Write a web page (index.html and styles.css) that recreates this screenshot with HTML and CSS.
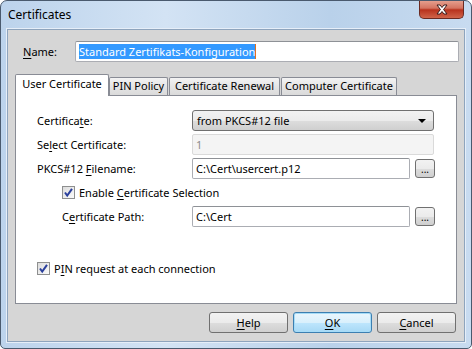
FILE: index.html
```html
<!DOCTYPE html>
<html>

<head>
  <meta charset="UTF-8" />
  <link rel="stylesheet" href="styles.css">
</head>

<body>
  <div class="window">
    <!-- Titelleiste -->
    <div class="titlebar">
      <span class="title">Certificates</span>
      <span class="close">
        <svg width="14" height="11" viewBox="0 0 14 11">
          <path d="M2 1 L5 1 L7 3.5 L9 1 L12 1 L8.6 5.5 L12 10 L9 10 L7 7.5 L5 10 L2 10 L5.4 5.5 Z"
            fill="#fff" stroke="#3a1a1a" stroke-width="1" stroke-linejoin="round" />
        </svg>
      </span>
    </div>

    <div class="client">
      <div class="name-row">
        <span class="lbl"><u>N</u>ame:</span>
        <div class="field name-field"><span class="sel">Standard Zertifikats-Konfiguration</span><span class="caret"></span></div>
      </div>

      <div class="tabs">
        <div class="tab active t1">User Certificate</div>
        <div class="tab t2">PIN Policy</div>
        <div class="tab t3">Certificate Renewal</div>
        <div class="tab t4">Computer Certificate</div>
      </div>

      <div class="panel">
        <div class="row">
          <span class="lbl">Certifica<u>t</u>e:</span>
          <div class="combo">
            <span>from PKCS#12 file</span>
            <span class="arrow"></span>
          </div>
        </div>
        <div class="row">
          <span class="lbl">Se<u>l</u>ect Certificate:</span>
          <div class="field disabled wide">1</div>
        </div>
        <div class="row">
          <span class="lbl">PKCS#12 <u>F</u>ilename:</span>
          <div class="field">C:\Cert\usercert.p12</div>
          <div class="dots">...</div>
        </div>
        <div class="row indent">
          <span class="check"><svg width="11" height="11" viewBox="0 0 11 11"><path d="M2 5.5 L4.2 8.5 L9 1.8" fill="none" stroke="#2a3f9c" stroke-width="2" /></svg></span>
          <span>Enable <u>C</u>ertificate Selection</span>
        </div>
        <div class="row indent">
          <span class="lbl short">C<u>e</u>rtificate Path:</span>
          <div class="field">C:\Cert</div>
          <div class="dots">...</div>
        </div>
        <div class="row pin">
          <span class="check"><svg width="11" height="11" viewBox="0 0 11 11"><path d="M2 5.5 L4.2 8.5 L9 1.8" fill="none" stroke="#2a3f9c" stroke-width="2" /></svg></span>
          <span>P<u>I</u>N request at each connection</span>
        </div>
      </div>

      <div class="buttons">
        <div class="btn"><u>H</u>elp</div>
        <div class="btn default"><u>O</u>K</div>
        <div class="btn"><u>C</u>ancel</div>
      </div>
    </div>
  </div>
</body>

</html>
```

FILE: styles.css
```css
html,
body {
  margin: 0;
  padding: 0;
  background: #fff;
}

body {
  font-family: "Noto Sans", "Open Sans", sans-serif;
  font-size: 11px;
  color: #000;
}

u {
  text-decoration-thickness: 1px;
  text-underline-offset: 2px;
}

/* Fensterrahmen */
.window {
  position: relative;
  width: 470px;
  height: 347px;
  border: 1px solid #4a5a6e;
  border-radius: 7px 7px 5px 5px;
  background: linear-gradient(to right, #bcd3ec 0%, #d3e3f4 35%, #b9d1ea 70%, #c8dbf0 100%);
  overflow: hidden;
}

.titlebar {
  height: 28px;
  display: flex;
  align-items: center;
  padding-left: 7px;
}

.title {
  font-size: 12px;
  padding-bottom: 2px;
}

.close {
  position: absolute;
  top: -1px;
  right: 7px;
  width: 45px;
  height: 19px;
  border: 1px solid #6b2a22;
  border-top: none;
  border-radius: 0 0 5px 5px;
  background: linear-gradient(to bottom, #e8a493 0%, #d47461 45%, #b8321d 55%, #d0644a 100%);
  display: flex;
  align-items: center;
  justify-content: center;
  box-sizing: border-box;
}

/* Client-Bereich */
.client {
  margin: 0 6px 0 6px;
  height: 313px;
  box-sizing: border-box;
  border: 1px solid #8ea4bd;
  background: #d6d6d6;
  box-shadow: 0 0 0 1px #e6eef8;
}

.name-row {
  display: flex;
  align-items: center;
  padding: 11px 0 0 15px;
  height: 21px;
}

.name-row .lbl {
  width: 52px;
}

.field {
  box-sizing: border-box;
  height: 21px;
  border: 1px solid #abadb3;
  border-top-color: #8e9196;
  border-radius: 2px;
  background: #fff;
  padding: 0 3px;
  display: flex;
  align-items: center;
  width: 218px;
  white-space: nowrap;
}

.name-field {
  width: 384px;
}

.sel {
  background: #3399ff;
  color: #fff;
  line-height: 15px;
}

.caret {
  display: inline-block;
  width: 1px;
  height: 15px;
  background: #e07020;
}

/* Registerkarten */
.tabs {
  display: flex;
  align-items: flex-end;
  margin: 12px 0 0 7px;
  height: 21px;
  position: relative;
  z-index: 1;
}

.tab {
  box-sizing: border-box;
  height: 18px;
  border: 1px solid #898c95;
  border-bottom: none;
  border-radius: 2px 2px 0 0;
  background: linear-gradient(to bottom, #f3f3f3, #e5e5e5 50%, #dadada);
  text-align: center;
  line-height: 16px;
  margin-right: 1px;
  white-space: nowrap;
}

.tab.active {
  height: 22px;
  margin-bottom: -1px;
  background: #fff;
  line-height: 18px;
  margin-right: 0;
}

.t1 { width: 94px; }
.t2 { width: 59px; }
.t3 { width: 111px; }
.t4 { width: 116px; }

.panel {
  box-sizing: border-box;
  margin-left: 7px;
  width: 442px;
  height: 209px;
  border: 1px solid #898c95;
  background: #fff;
  padding: 14px 0 0 21px;
}

.row {
  display: flex;
  align-items: center;
  height: 21px;
  margin-bottom: 3px;
}

.row .lbl {
  width: 155px;
}

.row.indent {
  padding-left: 25px;
}

.row .lbl.short {
  width: 130px;
}

.combo {
  box-sizing: border-box;
  width: 242px;
  height: 21px;
  border: 1px solid #707070;
  border-radius: 3px;
  background: linear-gradient(to bottom, #f2f2f2 0%, #ebebeb 50%, #dddddd 51%, #cfcfcf 100%);
  display: flex;
  align-items: center;
  justify-content: space-between;
  padding: 0 7px 0 4px;
}

.arrow {
  width: 0;
  height: 0;
  border-left: 4px solid transparent;
  border-right: 4px solid transparent;
  border-top: 4px solid #000;
}

.field.disabled {
  background: #f4f4f4;
  border-color: #dadada;
  color: #8d8d8d;
}

.field.wide {
  width: 242px;
}

.dots {
  box-sizing: border-box;
  width: 20px;
  height: 19px;
  margin-left: 5px;
  border: 1px solid #707070;
  border-radius: 3px;
  background: linear-gradient(to bottom, #f2f2f2 0%, #ebebeb 50%, #dddddd 51%, #cfcfcf 100%);
  text-align: center;
  line-height: 18px;
  font-size: 10px;
}

.check {
  box-sizing: border-box;
  width: 13px;
  height: 13px;
  border: 1px solid #8e8f8f;
  background: linear-gradient(to bottom right, #dcdcdc, #fbfbfb);
  display: flex;
  align-items: center;
  justify-content: center;
  margin-right: 4px;
}

.row.pin {
  margin-top: 31px;
}

/* Schaltflächen */
.buttons {
  display: flex;
  justify-content: flex-end;
  gap: 5px;
  padding: 8px 8px 0 0;
}

.btn {
  box-sizing: border-box;
  width: 79px;
  height: 21px;
  border: 1px solid #707070;
  border-radius: 3px;
  background: linear-gradient(to bottom, #f2f2f2 0%, #ebebeb 50%, #dddddd 51%, #cfcfcf 100%);
  text-align: center;
  line-height: 19px;
}

.btn.default {
  border-color: #3c7fb1;
  box-shadow: inset 0 0 0 1px #a6dcf7;
  background: linear-gradient(to bottom, #eaf6fd 0%, #d9f0fc 50%, #bee6fd 51%, #a7d9f5 100%);
}
```
